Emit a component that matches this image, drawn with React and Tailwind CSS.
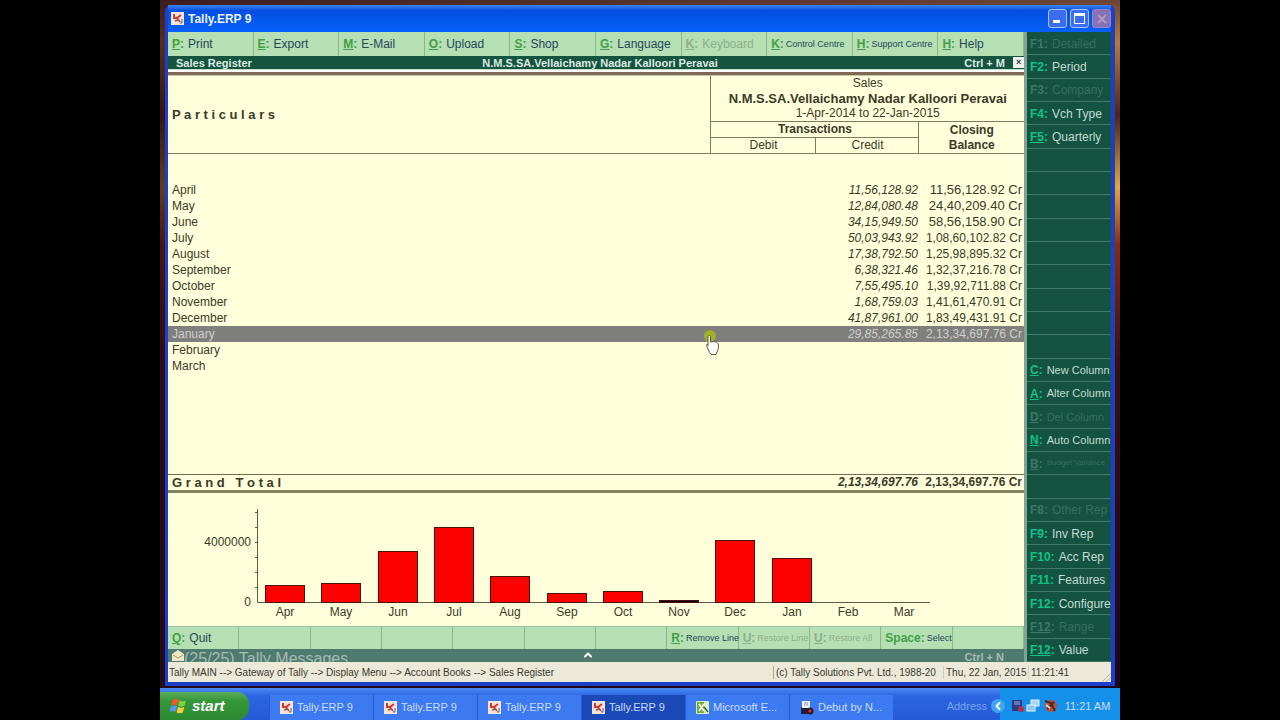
import React from 'react';
import { ChevronUp, ChevronLeft } from 'lucide-react';

const COMPANY = 'N.M.S.SA.Vellaichamy Nadar Kalloori Peravai';

const topMenu = [
  { k: 'P', label: 'Print' },
  { k: 'E', label: 'Export' },
  { k: 'M', label: 'E-Mail' },
  { k: 'O', label: 'Upload' },
  { k: 'S', label: 'Shop' },
  { k: 'G', label: 'Language' },
  { k: 'K', label: 'Keyboard', disabled: true },
  { k: 'K', label: 'Control Centre', small: true },
  { k: 'H', label: 'Support Centre', small: true },
  { k: 'H', label: 'Help' },
];

const bottomMenu = [
  { k: 'Q', label: 'Quit' },
  null,
  null,
  null,
  null,
  null,
  null,
  { k: 'R', label: 'Remove Line', small: true },
  { k: 'U', label: 'Restore Line', small: true, disabled: true },
  { k: 'U', label: 'Restore All', small: true, disabled: true },
  { k: 'Space', label: 'Select', small: true, plain: true },
  null,
];

const sideMenu = [
  { k: 'F1', label: 'Detailed', disabled: true },
  { k: 'F2', label: 'Period' },
  { k: 'F3', label: 'Company', disabled: true },
  { k: 'F4', label: 'Vch Type' },
  { k: 'F5', label: 'Quarterly', underline: true },
  null,
  null,
  null,
  null,
  null,
  null,
  null,
  null,
  null,
  { k: 'C', label: 'New Column', underline: true, size: 'text-[11px]' },
  { k: 'A', label: 'Alter Column', underline: true, size: 'text-[11px]' },
  { k: 'D', label: 'Del Column', underline: true, size: 'text-[11px]', disabled: true },
  { k: 'N', label: 'Auto Column', underline: true, size: 'text-[11px]' },
  { k: 'B', label: 'Budget Variance', underline: true, size: 'text-[8px]', disabled: true },
  null,
  { k: 'F8', label: 'Other Rep', disabled: true },
  { k: 'F9', label: 'Inv Rep' },
  { k: 'F10', label: 'Acc Rep' },
  { k: 'F11', label: 'Features' },
  { k: 'F12', label: 'Configure' },
  { k: 'F12', label: 'Range', underline: true, disabled: true },
  { k: 'F12', label: 'Value', underline: true },
];

const months = [
  { name: 'April', short: 'Apr', credit: '11,56,128.92', closing: '11,56,128.92 Cr' },
  { name: 'May', short: 'May', credit: '12,84,080.48', closing: '24,40,209.40 Cr' },
  { name: 'June', short: 'Jun', credit: '34,15,949.50', closing: '58,56,158.90 Cr' },
  { name: 'July', short: 'Jul', credit: '50,03,943.92', closing: '1,08,60,102.82 Cr' },
  { name: 'August', short: 'Aug', credit: '17,38,792.50', closing: '1,25,98,895.32 Cr' },
  { name: 'September', short: 'Sep', credit: '6,38,321.46', closing: '1,32,37,216.78 Cr' },
  { name: 'October', short: 'Oct', credit: '7,55,495.10', closing: '1,39,92,711.88 Cr' },
  { name: 'November', short: 'Nov', credit: '1,68,759.03', closing: '1,41,61,470.91 Cr' },
  { name: 'December', short: 'Dec', credit: '41,87,961.00', closing: '1,83,49,431.91 Cr' },
  { name: 'January', short: 'Jan', credit: '29,85,265.85', closing: '2,13,34,697.76 Cr', selected: true },
  { name: 'February', short: 'Feb' },
  { name: 'March', short: 'Mar' },
];

const tasks = [
  { label: 'Tally.ERP 9', icon: 'tally' },
  { label: 'Tally.ERP 9', icon: 'tally' },
  { label: 'Tally.ERP 9', icon: 'tally' },
  { label: 'Tally.ERP 9', icon: 'tally', active: true },
  { label: 'Microsoft E...', icon: 'excel' },
  { label: 'Debut by N...', icon: 'debut' },
];

const TallyIcon = () => (
  <svg viewBox="0 0 13 13" className="h-[13px] w-[13px] shrink-0">
    <rect width="13" height="13" fill="#f4e4dc" />
    <path d="M3 2v4h3l4-3" fill="none" stroke="#d8392b" strokeWidth="2" />
    <path d="M6 6l3 4M4 9l3-1" fill="none" stroke="#b5443c" strokeWidth="1.5" />
    <path d="M11 7v4H9" fill="none" stroke="#6e5a66" strokeWidth="1" />
  </svg>
);

const ExcelIcon = () => (
  <svg viewBox="0 0 13 13" className="h-[13px] w-[13px] shrink-0">
    <rect width="13" height="13" rx="1" fill="#d9ecc4" />
    <path d="M1 1h7v11H1z" fill="#6fae3d" />
    <path d="M3 3l5 7M8 3L3 10" stroke="#fff" strokeWidth="1.6" />
    <path d="M8 6l4 5" stroke="#33591d" strokeWidth="1.4" />
  </svg>
);

const DebutIcon = () => (
  <svg viewBox="0 0 14 14" className="h-[14px] w-[14px] shrink-0">
    <rect x="1" y="6" width="9" height="7" fill="#1b2345" />
    <rect x="2" y="0" width="8" height="7" fill="#eef2ff" />
    <path d="M4 2h4M4 4h4" stroke="#8a94b8" />
    <circle cx="10" cy="10" r="3.5" fill="#3a1424" />
    <circle cx="10" cy="10" r="1.5" fill="#e0303a" />
  </svg>
);

const taskIcons = { tally: TallyIcon, excel: ExcelIcon, debut: DebutIcon };

const WindowsFlag = () => (
  <svg viewBox="0 0 18 18" className="h-[18px] w-[18px]">
    <path d="M2.500 3c2-1.500 4-1.500 6-.3L7 8.300c-2-1-4-1-6 .3z" fill="#ee5a2a" />
    <path d="M9.500 3.300c2 1.200 4 1.200 6.500.2l-1.500 5.300c-2 1-4.300 1-6.300-.2z" fill="#86cf3c" />
    <path d="M.9 9.600c2-1.300 4-1.300 6-.3l-1.500 5.500c-2-1-4-1-6 .3z" fill="#5a94f4" />
    <path d="M8 9.800c2 1.200 4 1.200 6.300.2l-1.500 5.500c-2 1-4.300 1-6.300-.2z" fill="#f8d13a" />
  </svg>
);

const HandCursor = () => (
  <svg viewBox="0 0 22 32" className="absolute top-0 -right-3 z-10 h-8 w-[22px]">
    <circle cx="9" cy="10" r="6" fill="#b4c400" opacity="0.7" />
    <path
      d="M8 9.500c1 0 1.500.5 1.500 1.500v5c3-.8 7.500-.5 8 3 .3 4-1 5.500-2.500 9.500h-5C8 26 6.500 22 5.500 19.500c0-1.500 1-1.500 1.500 0V11c0-1 .3-1.500 1-1.500z"
      fill="#fff"
      stroke="#55553f"
      strokeWidth="1"
    />
  </svg>
);

const MenuButton = ({ item }) => {
  if (!item) return <div className="border-r border-[#8cb58c]" />;
  return (
    <button
      disabled={item.disabled}
      className={`flex min-w-0 items-center border-r border-[#8cb58c] pl-1 text-left whitespace-nowrap ${
        item.small ? 'gap-[2px]' : 'gap-1'
      }`}
    >
      <span className={`font-bold ${item.disabled ? 'text-[#8fae8b]' : 'text-[#3fa044]'}`}>
        <span className={item.plain ? '' : 'underline'}>{item.k}</span>:
      </span>
      <span
        className={`${item.disabled ? 'text-[#8fae8b]' : 'text-[#24465a]'} ${item.small ? 'text-[9px]' : ''}`}
      >
        {item.label}
      </span>
    </button>
  );
};

const SideButton = ({ item }) => {
  if (!item) return <div className="flex-1 border-b border-[#3f7a69] pt-px pl-[3px]" />;
  return (
    <button
      disabled={item.disabled}
      className="flex flex-1 items-center gap-1 border-b border-[#3f7a69] pt-px pl-[3px] text-left whitespace-nowrap"
    >
      <span className={`font-bold ${item.disabled ? 'text-[#3d7666]' : 'text-[#0fc287]'}`}>
        <span className={item.underline ? 'underline' : ''}>{item.k}</span>:
      </span>
      <span className={`${item.disabled ? 'text-[#34705f]' : 'text-[#c3dcd0]'} ${item.size || ''}`}>
        {item.label}
      </span>
    </button>
  );
};

const TitleBar = () => (
  <div className="flex h-[27px] items-center gap-1 bg-linear-to-b from-[#3d84f2] via-[#0450e0] via-20% to-[#0560fc] pl-[3px]">
    <TallyIcon />
    <h1 className="flex-1 text-xs font-bold text-[#e8f0ff]">Tally.ERP 9</h1>
    <div className="flex gap-[3px]">
      <button
        aria-label="Minimize"
        className="flex h-[19px] w-[19px] items-end rounded-[3px] border border-[#a9c4fa] bg-[#3c6df0] p-1"
      >
        <span className="h-[3px] w-[7px] bg-white" />
      </button>
      <button
        aria-label="Maximize"
        className="flex h-[19px] w-[19px] items-center justify-center rounded-[3px] border border-[#a9c4fa] bg-[#3c6df0]"
      >
        <span className="h-[11px] w-[11px] border border-t-[3px] border-white" />
      </button>
      <button
        aria-label="Close"
        disabled
        className="flex h-[19px] w-[19px] items-center justify-center rounded-[3px] border border-[#8d86d0] bg-[#8672b4]"
      >
        <svg viewBox="0 0 10 10" className="h-[10px] w-[10px]">
          <path d="M1 1l8 8M9 1L1 9" stroke="#b29ac4" strokeWidth="2" />
        </svg>
      </button>
    </div>
  </div>
);

const RegisterTable = () => (
  <table className="w-full table-fixed border-collapse text-xs leading-[15px] text-[#3b3a28]">
    <colgroup>
      <col />
      <col className="w-[105px]" />
      <col className="w-[103px]" />
      <col className="w-[105px]" />
    </colgroup>
    <thead className="border-b border-[#7d7a62]">
      <tr>
        <th rowSpan={3} className="border-r border-[#7d7a62] pl-1 text-left text-[13px] font-bold">
          P a r t i c u l a r s
        </th>
        <th colSpan={3} className="border-b border-[#7d7a62] p-0 font-normal">
          <div>Sales</div>
          <div className="text-[13px] leading-[15px] font-bold whitespace-nowrap">{COMPANY}</div>
          <div>1-Apr-2014 to 22-Jan-2015</div>
        </th>
      </tr>
      <tr>
        <th colSpan={2} className="border-r border-b border-[#7d7a62] p-0 font-bold">
          Transactions
        </th>
        <th rowSpan={2} className="p-0 font-bold">
          Closing
          <br />
          Balance
        </th>
      </tr>
      <tr>
        <th className="border-r border-[#7d7a62] p-0 font-normal">Debit</th>
        <th className="border-r border-[#7d7a62] p-0 font-normal">Credit</th>
      </tr>
    </thead>
    <tbody className="leading-4">
      <tr>
        <td colSpan={4} className="h-7 p-0" />
      </tr>
      {months.map((m) => (
        <tr key={m.name} className={m.selected ? 'bg-[#7f7f7d] text-[#cfcfcb]' : ''}>
          <td className="relative p-0 pl-1">
            {m.name}
            {m.selected && <HandCursor />}
          </td>
          <td className="p-0" />
          <td className="p-0 pr-px text-right italic">{m.credit}</td>
          <td
            className={`p-0 pr-[2px] text-right whitespace-nowrap ${
              m.closing && m.closing.length < 16 ? 'text-[13px] leading-4' : ''
            }`}
          >
            {m.closing}
          </td>
        </tr>
      ))}
      <tr>
        <td colSpan={4} className="h-[101px] p-0" />
      </tr>
    </tbody>
    <tfoot className="border-t border-b-[3px] border-t-[#6d6b52] border-b-[#85835f] font-bold">
      <tr>
        <td className="p-0 pl-1 text-[13px]">G r a n d &nbsp; T o t a l</td>
        <td className="p-0" />
        <td className="p-0 pr-px text-right italic">2,13,34,697.76</td>
        <td className="p-0 pr-[2px] text-right whitespace-nowrap">2,13,34,697.76 Cr</td>
      </tr>
    </tfoot>
  </table>
);

const BASELINE = 109;
const MILLION = 15;

const SalesChart = () => (
  <svg viewBox="0 0 856 132" className="w-full" role="img" aria-label="Monthly sales">
    <g stroke="#5c5a44" strokeWidth="1">
      <path d={`M89.500 16V${BASELINE}.5H762`} fill="none" />
      {[1, 2, 3, 4, 5, 6].map((n) => (
        <path key={n} d={`M87 ${BASELINE - n * MILLION + 0.5}h3`} />
      ))}
    </g>
    <g fontSize="12" fill="#3b3a28">
      <text x="83" y="53" textAnchor="end">4000000</text>
      <text x="83" y="113" textAnchor="end">0</text>
      {months.map((m, i) => {
        const value = m.credit ? Number(m.credit.replace(/,/g, '')) : 0;
        const height = Math.floor((value / 1000000) * MILLION);
        const x = Math.round(97 + i * 56.3);
        return (
          <g key={m.short}>
            {value > 0 && (
              <rect
                x={x + 0.5}
                y={BASELINE - height + 0.5}
                width="39"
                height={height}
                fill={height > 4 ? '#fb0200' : '#000'}
                stroke="#4a1208"
              />
            )}
            <text x={x + 20} y="123" textAnchor="middle">{m.short}</text>
          </g>
        );
      })}
    </g>
  </svg>
);

const StatusBar = () => (
  <div className="flex h-5 items-center bg-[#ece9d8] pt-px text-[10px] whitespace-nowrap text-[#3a3830]">
    <div className="flex-1 pl-px">
      Tally MAIN --&gt; Gateway of Tally --&gt; Display Menu --&gt; Account Books --&gt; Sales Register
    </div>
    <div className="w-[170px] border-l border-[#aca899] pl-[2px]">(c) Tally Solutions Pvt. Ltd., 1988-20</div>
    <div className="w-[85px] border-l border-[#d0ccbb] pl-[2px]">Thu, 22 Jan, 2015</div>
    <div className="w-[83px] border-l border-[#d0ccbb] pl-[2px]">11:21:41</div>
    <svg viewBox="0 0 10 10" className="-ml-[10px] h-[10px] w-[10px] self-end">
      <path d="M1 10l9-9M5 10l5-5" stroke="#b9b5a3" />
    </svg>
  </div>
);

const Taskbar = () => (
  <div className="flex h-8 bg-linear-to-b from-[#4a8af4] via-[#2c66e2] via-25% to-[#2459d8] text-[11px] text-[#c9dcff]">
    <button className="mt-1 flex w-[89px] items-center gap-1 rounded-r-xl bg-linear-to-b from-[#5cae5a] via-[#36983a] via-30% to-[#2c8a30] pl-[10px] text-[15px] font-bold text-white italic">
      <WindowsFlag />
      start
    </button>
    <div className="ml-5 flex min-w-0 flex-1 pt-[7px]">
      {tasks.map((t, i) => {
        const Icon = taskIcons[t.icon];
        return (
          <button
            key={i}
            className={`flex w-[104px] min-w-0 items-center gap-1 border-l border-[#2a5ad0] pl-[10px] whitespace-nowrap ${
              t.active ? 'bg-[#1c49b8]' : 'bg-[#3c7af2]'
            }`}
          >
            <Icon />
            {t.label}
          </button>
        );
      })}
    </div>
    <div className="flex items-center pt-1 pr-1 text-[#7ba4ee]">Address</div>
    <div className="flex w-[129px] items-center gap-1 bg-linear-to-r from-transparent from-7% to-[#1590ea] to-7% pt-1">
      <button
        aria-label="Show hidden icons"
        className="flex h-[14px] w-[14px] items-center justify-center rounded-full bg-[#3fa4f4] text-white"
      >
        <ChevronLeft className="h-3 w-3" strokeWidth={4} />
      </button>
      <svg viewBox="0 0 50 16" className="h-4 w-[50px]">
        <rect x="3" y="2" width="10" height="11" fill="#2a3c84" />
        <path d="M5 4h6M5 6h6" stroke="#9ab0e8" />
        <circle cx="12" cy="11" r="3" fill="#b0304c" />
        <rect x="22" y="2" width="8" height="6" fill="#a8d4fa" stroke="#e6f4ff" />
        <rect x="18" y="7" width="8" height="6" fill="#8cc4f6" stroke="#e6f4ff" />
        <circle cx="42" cy="8" r="6" fill="#b5523a" />
        <path d="M36 3l6 2 4 8M38 11l7-7" stroke="#4a2c22" strokeWidth="2" fill="none" />
        <path d="M37 7l4 3" stroke="#ead6c8" strokeWidth="2" />
      </svg>
      <span className="flex-1 pr-2 text-center whitespace-nowrap">11:21 AM</span>
    </div>
  </div>
);

const App = () => {
  return (
    <div className="min-h-screen bg-black font-['Liberation_Sans',Arial,sans-serif]">
      <div className="mx-auto flex min-h-screen w-3/4 flex-col bg-[linear-gradient(180deg,#6b4438,#b87a3c_6%,#4a2418_16%,#e0a840_26%,#8a2a10_34%,#38100f_50%,#1c0420)]">
        <div className="flex flex-1 flex-col bg-linear-to-r from-[#2a0c14]/70 to-transparent px-[5px] pt-[5px] pb-[2px]">
          <main className="flex flex-1 flex-col rounded-t-md border-r-4 border-b-4 border-l-[3px] border-[#1b3fc9] bg-[#0550e0] text-xs">
            <TitleBar />
            <div className="flex flex-1">
              <div className="flex min-w-0 flex-1 flex-col bg-[#ffffdc]">
                <nav className="grid h-6 grid-cols-10 bg-[#b6dfb3]">
                  {topMenu.map((item, i) => (
                    <MenuButton key={i} item={item} />
                  ))}
                </nav>
                <div className="flex h-[13px] items-center bg-[#15543f] text-[11px] leading-3 font-bold text-[#dcebe2]">
                  <span className="flex-1 pl-2">Sales Register</span>
                  <span className="whitespace-nowrap">{COMPANY}</span>
                  <span className="flex flex-1 items-center justify-end gap-2">
                    Ctrl + M
                    <button
                      aria-label="Close register"
                      className="flex h-[11px] w-[11px] items-center justify-center bg-[#eef0ea] text-[9px] leading-none text-[#333]"
                    >
                      ×
                    </button>
                  </span>
                </div>
                <div className="h-[3px] border-t border-[#c4e0c4] bg-white" />
                <div className="h-1 border-b border-[#c9c2a4] bg-[#7c6a54]" />
                <RegisterTable />
                <div className="flex-1">
                  <SalesChart />
                </div>
                <nav className="grid h-[23px] grid-cols-12 border-t border-[#9cc49a] bg-[#b6e0b4]">
                  {bottomMenu.map((item, i) => (
                    <MenuButton key={i} item={item} />
                  ))}
                </nav>
                <div className="flex h-[13px] justify-between overflow-hidden bg-[#4f7a70] pr-5 pl-1 leading-4 font-bold text-[#a3bdb3]">
                  <span className="flex flex-1 items-start text-base leading-5">
                    <svg viewBox="0 0 12 11" className="mt-px h-[11px] w-3 shrink-0">
                      <path d="M0 4l6-4 6 4v7H0z" fill="#efe8c8" />
                      <path d="M1 5l5 3 5-3" fill="none" stroke="#b09a5a" />
                    </svg>
                    <span className="font-normal whitespace-nowrap">(25/25) Tally Messages</span>
                  </span>
                  <ChevronUp className="h-3 w-3 text-white" strokeWidth={4} />
                  <span className="flex-1 text-right text-[11px]">Ctrl + N</span>
                </div>
              </div>
              <aside className="flex w-[87px] flex-col border-l-[3px] border-[#7fa394] bg-[#145241]">
                {sideMenu.map((item, i) => (
                  <SideButton key={i} item={item} />
                ))}
              </aside>
            </div>
            <StatusBar />
          </main>
        </div>
        <Taskbar />
      </div>
    </div>
  );
};

export default App;
